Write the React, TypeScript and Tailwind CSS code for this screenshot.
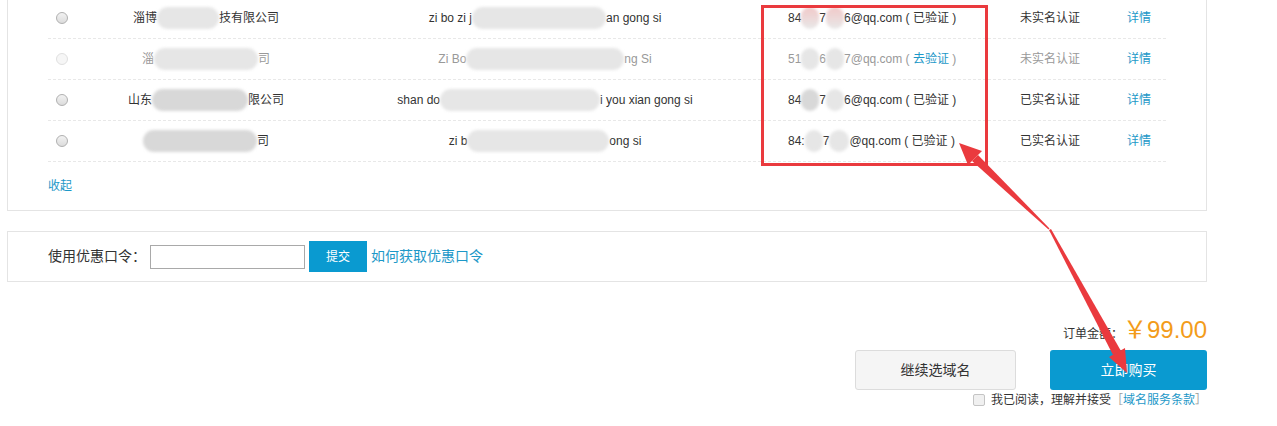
import React from "react";

type Seg = { t?: string; blob?: number; dark?: boolean; pink?: boolean; link?: boolean };

type Row = {
  disabled?: boolean;
  company: Seg[];
  pinyin: Seg[];
  email: Seg[];
  status: string;
};

const ROWS: Row[] = [
  {
    company: [{ t: "淄博" }, { blob: 62 }, { t: "技有限公司" }],
    pinyin: [{ t: "zi bo zi j" }, { blob: 134 }, { t: "an gong si" }],
    email: [{ t: "84" }, { blob: 18, pink: true }, { t: "7" }, { blob: 18, pink: true }, { t: "6@qq.com ( 已验证 )" }],
    status: "未实名认证",
  },
  {
    disabled: true,
    company: [{ t: "淄" }, { blob: 104 }, { t: "司" }],
    pinyin: [{ t: "Zi Bo" }, { blob: 158 }, { t: "ng Si" }],
    email: [{ t: "51" }, { blob: 18 }, { t: "6" }, { blob: 18 }, { t: "7@qq.com ( " }, { t: "去验证", link: true }, { t: " )" }],
    status: "未实名认证",
  },
  {
    company: [{ t: "山东" }, { blob: 96, dark: true }, { t: "限公司" }],
    pinyin: [{ t: "shan do" }, { blob: 160 }, { t: "i you xian gong si" }],
    email: [{ t: "84" }, { blob: 18, dark: true }, { t: "7" }, { blob: 18 }, { t: "6@qq.com ( 已验证 )" }],
    status: "已实名认证",
  },
  {
    company: [{ blob: 114, dark: true }, { t: "司" }],
    pinyin: [{ t: "zi b" }, { blob: 142 }, { t: "ong si" }],
    email: [{ t: "84:" }, { blob: 18 }, { t: "7" }, { blob: 20 }, { t: "@qq.com ( 已验证 )" }],
    status: "已实名认证",
  },
];

function Segs({ segs }: { segs: Seg[] }) {
  return (
    <span className="inline-flex items-center whitespace-pre">
      {segs.map((s, i) =>
        s.blob ? (
          <span
            key={i}
            style={{ width: s.blob }}
            className={`inline-block h-[22px] rounded-full blur-[1.5px] ${
              s.dark ? "bg-[#d8d8d8]" : s.pink ? "bg-gradient-to-b from-[#f0c8c8] to-[#e8e8e8]" : "bg-[#e6e6e6]"
            }`}
          />
        ) : (
          <span key={i} className={s.link ? "text-[#1d98c8]" : ""}>
            {s.t}
          </span>
        )
      )}
    </span>
  );
}

function Radio({ disabled }: { disabled?: boolean }) {
  return (
    <span
      className={`inline-block w-[12px] h-[12px] rounded-full border ${
        disabled ? "border-[#e0e0e0] bg-[#f6f6f6]" : "border-[#b0b0b0] bg-gradient-to-b from-[#f2f2f2] to-[#dcdcdc]"
      }`}
    />
  );
}

function Annotations() {
  return (
    <svg className="absolute left-0 top-0 pointer-events-none" width="1277" height="426">
      <rect x="762.5" y="6.5" width="224" height="158" fill="none" stroke="#ea3a3e" strokeWidth="3" />
      {/* arrow to the email box */}
      <polygon points="959,143 982,151 968,165" fill="#ea3a3e" />
      <polygon points="978,155 1049.5,228.5 1048.5,229.5 972,161" fill="#ea3a3e" />
      {/* arrow to the buy button */}
      <polygon points="1127,373 1109,357 1125,348" fill="#ea3a3e" />
      <polygon points="1049,230 1051,229 1121,351 1113,355" fill="#ea3a3e" />
    </svg>
  );
}

export default function App() {
  return (
    <div
      className="relative w-[1277px] h-[426px] overflow-hidden bg-white text-[12px] text-[#333]"
      style={{ fontFamily: '"Liberation Sans", Arial, "Noto Sans CJK SC", sans-serif' }}
    >
      {/* 域名持有者列表 */}
      <div className="ml-[7px] -mt-[3px] w-[1200px] border border-[#e4e4e4] pl-[40px]">
        <div className="w-[1118px]">
          {ROWS.map((r, i) => (
            <div
              key={i}
              className={`grid grid-cols-[52px_212px_466px_232px_107px_49px] items-center h-[41px] border-b border-dashed border-[#e8e8e8] ${
                r.disabled ? "text-[#999]" : ""
              }`}
            >
              <div className="pl-[8px] flex items-center">
                <Radio disabled={r.disabled} />
              </div>
              <div className="flex justify-center">
                <Segs segs={r.company} />
              </div>
              <div className="flex justify-center">
                <Segs segs={r.pinyin} />
              </div>
              <div className="pl-[10px]">
                <Segs segs={r.email} />
              </div>
              <div className="pl-[10px]">{r.status}</div>
              <div className="pl-[10px] text-[#1d98c8]">详情</div>
            </div>
          ))}
        </div>
        <div className="mt-[16px] mb-[16px] leading-[16px] text-[#1d98c8]">收起</div>
      </div>

      {/* 优惠口令 */}
      <div className="ml-[7px] mt-[20px] w-[1200px] h-[51px] border border-[#e4e4e4] pl-[40px] flex items-center">
        <span className="text-[14px] text-[#333]">使用优惠口令：</span>
        <input className="ml-[4px] w-[155px] h-[24px] border border-[#a9a9a9] outline-none" />
        <button className="ml-[4px] w-[58px] h-[31px] bg-[#0a9ad0] text-white text-[12px]">提交</button>
        <span className="ml-[4px] text-[14px] text-[#1d98c8]">如何获取优惠口令</span>
      </div>

      {/* 订单 */}
      <div className="ml-[7px] w-[1200px] flex flex-col items-end">
        <div className="mt-[34px] flex items-baseline leading-[28px]">
          <span className="text-[12px] text-[#333]">订单金额：</span>
          <span className="text-[24px] text-[#f39c1a]">￥99.00</span>
        </div>
        <div className="mt-[2px] flex gap-[34px]">
          <button className="w-[161px] h-[40px] rounded-[3px] border border-[#dcdcdc] bg-[#f5f5f5] text-[14px] text-[#333]">
            继续选域名
          </button>
          <button className="w-[157px] h-[40px] rounded-[3px] bg-[#0a9ad0] text-[14px] text-white">立即购买</button>
        </div>
        <div className="mt-[2px] flex items-center leading-[16px] text-[12px]">
          <span className="inline-block w-[12px] h-[12px] border border-[#c4c4c4] bg-[#f0f0f0] rounded-[2px] mr-[6px]" />
          <span className="text-[#333]">我已阅读，理解并接受</span>
          <span className="text-[#999]">［</span>
          <span className="text-[#1d98c8]">域名服务条款</span>
          <span className="text-[#999]">］</span>
        </div>
      </div>

      <Annotations />
    </div>
  );
}
